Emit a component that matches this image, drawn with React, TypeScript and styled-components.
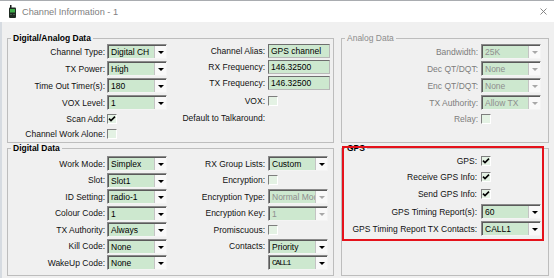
import styled, { createGlobalStyle } from "styled-components";

const GlobalStyle = createGlobalStyle`
  html, body {
    margin: 0;
    padding: 0;
    background: #f0f0f0;
  }
  body {
    font-family: "Liberation Sans", Arial, sans-serif;
    font-size: 8.5px;
    color: #000;
  }
  * {
    box-sizing: border-box;
  }
`;

const Window = styled.div`
  width: 554px;
  height: 278px;
  display: flex;
  flex-direction: column;
  background: #f0f0f0;
  overflow: hidden;
`;

const TitleBar = styled.div`
  height: 22px;
  flex: none;
  display: flex;
  align-items: center;
  background: #fff;
  border-top: 1px solid #a9acb0;
  padding: 0 7px 0 9px;
`;

const TitleText = styled.span`
  flex: 1;
  margin-left: 6px;
  font-size: 9.2px;
  color: #808080;
`;

const Body = styled.div`
  flex: 1;
  display: grid;
  grid-template-columns: 327px 208px;
  grid-template-rows: 110px 133px;
  column-gap: 7px;
  padding: 11px 0 0 5px;
  border-left: 2px solid #d6dbe1;
`;

const GroupBox = styled.fieldset<{ $padTop?: number }>`
  margin: 0;
  min-width: 0;
  padding: ${(p) => p.$padTop ?? 0}px 0 0 0;
  border: 1px solid #bdbdbd;
`;

const Legend = styled.legend<{ $muted?: boolean }>`
  margin-left: 3px;
  padding: 0 2px;
  line-height: 10px;
  font-size: 8.5px;
  font-weight: ${(p) => (p.$muted ? 400 : 700)};
  color: ${(p) => (p.$muted ? "#8c8c8c" : "#000")};
`;

const Columns = styled.div`
  display: flex;
`;

const FieldGrid = styled.div<{ $cols: string; $rows: string; $gap: number }>`
  display: grid;
  grid-template-columns: ${(p) => p.$cols};
  grid-template-rows: ${(p) => p.$rows};
  column-gap: ${(p) => p.$gap}px;
  align-items: center;
`;

const Label = styled.span<{ $disabled?: boolean }>`
  text-align: right;
  white-space: nowrap;
  line-height: 10px;
  color: ${(p) => (p.$disabled ? "#7d7d7d" : "#111")};
`;

const ComboBox = styled.div`
  height: 15px;
  display: flex;
  background: #cde8cf;
  border: 1px solid;
  border-color: #8a8a8a #f4f4f4 #f4f4f4 #8a8a8a;
  box-shadow: inset 1px 1px 0 #5a5a5a;
  overflow: hidden;
`;

const ComboText = styled.span<{ $disabled?: boolean; $mono?: boolean }>`
  flex: 1;
  min-width: 0;
  padding: 1px 0 0 3px;
  white-space: nowrap;
  overflow: hidden;
  line-height: 12px;
  color: ${(p) => (p.$disabled ? "#8e8e8e" : "#000")};
  ${(p) =>
    p.$mono &&
    `
    font-family: "Liberation Mono", monospace;
    font-size: 8px;
    letter-spacing: -1.2px;
  `}
`;

const DropButton = styled.span`
  width: 12px;
  flex: none;
  margin: 1px 0 0 0;
  display: flex;
  align-items: center;
  justify-content: center;
  background: #f9f9f9;
  border-left: 1px solid #c4c4c4;
`;

const Arrow = styled.span<{ $disabled?: boolean }>`
  width: 0;
  height: 0;
  margin-top: 1px;
  border-left: 3px solid transparent;
  border-right: 3px solid transparent;
  border-top: 3px solid ${(p) => (p.$disabled ? "#a8a8a8" : "#000")};
`;

const TextBox = styled.div`
  height: 14px;
  padding: 0 0 0 2px;
  line-height: 12px;
  white-space: nowrap;
  overflow: hidden;
  background: #cde8cf;
  border: 1px solid;
  border-color: #6e6e6e #b8b8b8 #b8b8b8 #6e6e6e;
`;

const CheckBox = styled.span`
  justify-self: start;
  width: 10px;
  height: 10px;
  display: flex;
  align-items: center;
  justify-content: center;
  background: #e4f2e4;
  border: 1px solid;
  border-color: #7e7e7e #ffffff #ffffff #7e7e7e;
`;

const GpsArea = styled.div`
  position: relative;
  display: flex;
`;

const GpsBox = styled(GroupBox)`
  flex: 1;
`;

const RedFrame = styled.div`
  position: absolute;
  top: 3px;
  left: 1px;
  width: 202px;
  height: 95px;
  border: 2px solid #e5121b;
  pointer-events: none;
`;

type Row =
  | { kind: "combo"; label?: string; value: string; disabled?: boolean; mono?: boolean; muted?: boolean }
  | { kind: "text"; label: string; value: string }
  | { kind: "check"; label: string; checked?: boolean; muted?: boolean }
  | { kind: "label"; label: string };

type Column = {
  cols: string;
  rows: string;
  gap: number;
  items: Row[];
};

function Combo({ value, disabled, mono }: { value: string; disabled?: boolean; mono?: boolean }) {
  return (
    <ComboBox>
      <ComboText $disabled={disabled} $mono={mono}>
        {value}
      </ComboText>
      <DropButton>
        <Arrow $disabled={disabled} />
      </DropButton>
    </ComboBox>
  );
}

function Check({ checked }: { checked?: boolean }) {
  return (
    <CheckBox>
      {checked && (
        <svg width="8" height="8" viewBox="0 0 8 8">
          <path d="M1 3.6 L3 5.6 L7 1.6" stroke="#000" strokeWidth="1.6" fill="none" />
        </svg>
      )}
    </CheckBox>
  );
}

function FieldColumn({ col }: { col: Column }) {
  return (
    <FieldGrid $cols={col.cols} $rows={col.rows} $gap={col.gap}>
      {col.items.map((row, i) => {
        const muted = "muted" in row && row.muted;
        return [
          <Label key={`l${i}`} $disabled={muted}>
            {row.label ? `${row.label}:` : ""}
          </Label>,
          row.kind === "combo" ? (
            <Combo key={`f${i}`} value={row.value} disabled={row.disabled} mono={row.mono} />
          ) : row.kind === "text" ? (
            <TextBox key={`f${i}`}>{row.value}</TextBox>
          ) : row.kind === "check" ? (
            <Check key={`f${i}`} checked={row.checked} />
          ) : (
            <span key={`f${i}`} />
          ),
        ];
      })}
    </FieldGrid>
  );
}

const topLeft: Column = {
  cols: "97px 60px",
  rows: "17px 17px 17px 17px 15px 15px",
  gap: 2,
  items: [
    { kind: "combo", label: "Channel Type", value: "Digital CH" },
    { kind: "combo", label: "TX Power", value: "High" },
    { kind: "combo", label: "Time Out Timer(s)", value: "180" },
    { kind: "combo", label: "VOX Level", value: "1" },
    { kind: "check", label: "Scan Add", checked: true },
    { kind: "check", label: "Channel Work Alone" },
  ],
};

const topMid: Column = {
  cols: "98px 62px",
  rows: "16px 16px 16px 20px 14px",
  gap: 3,
  items: [
    { kind: "text", label: "Channel Alias", value: "GPS channel" },
    { kind: "text", label: "RX Frequency", value: "146.32500" },
    { kind: "text", label: "TX Frequency", value: "146.32500" },
    { kind: "check", label: "VOX" },
    { kind: "label", label: "Default to Talkaround" },
  ],
};

const analog: Column = {
  cols: "136px 60px",
  rows: "17px 17px 17px 17px 15px",
  gap: 3,
  items: [
    { kind: "combo", label: "Bandwidth", value: "25K", disabled: true, muted: true },
    { kind: "combo", label: "Dec QT/DQT", value: "None", disabled: true, muted: true },
    { kind: "combo", label: "Enc QT/DQT", value: "None", disabled: true, muted: true },
    { kind: "combo", label: "TX Authority", value: "Allow TX", disabled: true, muted: true },
    { kind: "check", label: "Relay", muted: true },
  ],
};

const digitalRows = "17px 16px 17px 16px 17px 16px 17px";

const digLeft: Column = {
  cols: "97px 60px",
  rows: digitalRows,
  gap: 2,
  items: [
    { kind: "combo", label: "Work Mode", value: "Simplex" },
    { kind: "combo", label: "Slot", value: "Slot1" },
    { kind: "combo", label: "ID Setting", value: "radio-1" },
    { kind: "combo", label: "Colour Code", value: "1" },
    { kind: "combo", label: "TX Authority", value: "Always" },
    { kind: "combo", label: "Kill Code", value: "None" },
    { kind: "combo", label: "WakeUp Code", value: "None" },
  ],
};

const digMid: Column = {
  cols: "98px 60px",
  rows: digitalRows,
  gap: 3,
  items: [
    { kind: "combo", label: "RX Group Lists", value: "Custom" },
    { kind: "check", label: "Encryption" },
    { kind: "combo", label: "Encryption Type", value: "Normal Moc", disabled: true },
    { kind: "combo", label: "Encryption Key", value: "1", disabled: true },
    { kind: "check", label: "Promiscuous" },
    { kind: "combo", label: "Contacts", value: "Priority" },
    { kind: "combo", value: "CALL1", mono: true },
  ],
};

const gps: Column = {
  cols: "135px 60px",
  rows: "15px 17px 18px 17px 17px",
  gap: 4,
  items: [
    { kind: "check", label: "GPS", checked: true },
    { kind: "check", label: "Receive GPS Info", checked: true },
    { kind: "check", label: "Send GPS Info", checked: true },
    { kind: "combo", label: "GPS Timing Report(s)", value: "60" },
    { kind: "combo", label: "GPS Timing Report TX Contacts", value: "CALL1" },
  ],
};

function RadioIcon() {
  return (
    <svg width="7" height="13" viewBox="0 0 7 13">
      <rect x="1" y="0" width="1.5" height="3" fill="#1c1c1c" />
      <rect x="0" y="2.5" width="7" height="10.5" rx="1" fill="#1f2a22" />
      <rect x="1" y="4" width="5" height="3.5" fill="#3fae4a" />
      <rect x="1.5" y="9" width="1" height="1" fill="#6b8f6f" />
      <rect x="4.5" y="9" width="1" height="1" fill="#6b8f6f" />
    </svg>
  );
}

function CloseIcon() {
  return (
    <svg width="7" height="7" viewBox="0 0 7 7">
      <path d="M0.5 0.5 L6.5 6.5 M6.5 0.5 L0.5 6.5" stroke="#7a7a7a" strokeWidth="0.9" />
    </svg>
  );
}

export default function App() {
  return (
    <>
      <GlobalStyle />
      <Window>
        <TitleBar>
          <RadioIcon />
          <TitleText>Channel Information - 1</TitleText>
          <CloseIcon />
        </TitleBar>
        <Body>
          <GroupBox>
            <Legend>Digital/Analog Data</Legend>
            <Columns>
              <FieldColumn col={topLeft} />
              <FieldColumn col={topMid} />
            </Columns>
          </GroupBox>
          <GroupBox>
            <Legend $muted>Analog Data</Legend>
            <FieldColumn col={analog} />
          </GroupBox>
          <GroupBox $padTop={2}>
            <Legend>Digital Data</Legend>
            <Columns>
              <FieldColumn col={digLeft} />
              <FieldColumn col={digMid} />
            </Columns>
          </GroupBox>
          <GpsArea>
            <GpsBox>
              <Legend>GPS</Legend>
              <FieldColumn col={gps} />
            </GpsBox>
            <RedFrame />
          </GpsArea>
        </Body>
      </Window>
    </>
  );
}
